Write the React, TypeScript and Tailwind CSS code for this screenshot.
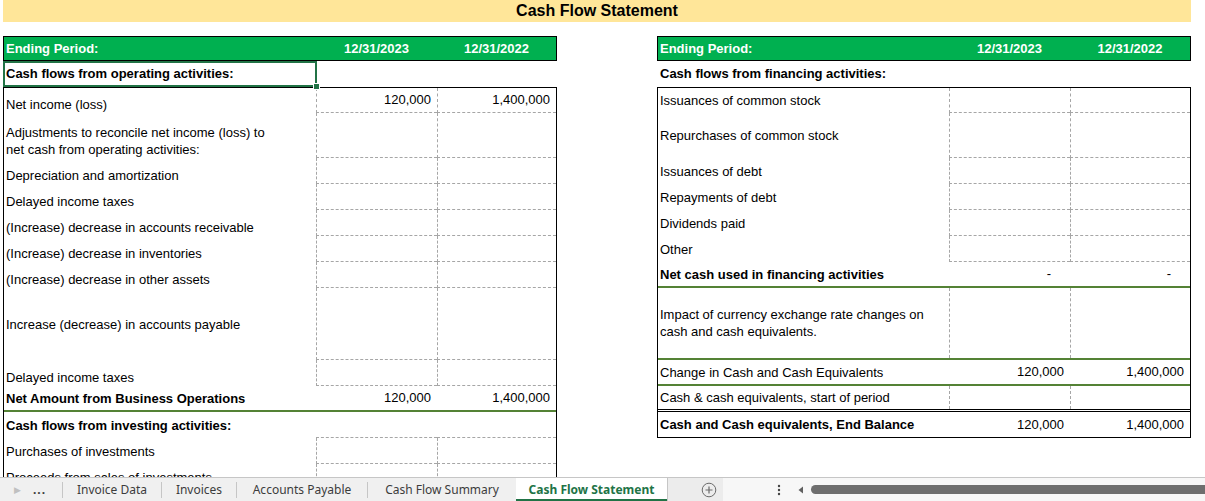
import type { ReactNode } from "react";

type Row = {
  label: string[];
  v1?: string;
  v2?: string;
  h: string;
  bold?: boolean;
  align?: "end" | "center";
  grid?: "full" | "vertical" | "bottom" | "none";
  line?: "green" | "double";
  dash?: boolean;
};

const leftRows: Row[] = [
  { label: ["Net income (loss)"], v1: "120,000", v2: "1,400,000", h: "h-[25px]", align: "end", grid: "full" },
  {
    label: ["Adjustments to reconcile net income (loss) to", "net cash from operating activities:"],
    h: "h-[45px]",
    align: "end",
    grid: "full",
  },
  { label: ["Depreciation and amortization"], h: "h-[26px]", align: "end", grid: "full" },
  { label: ["Delayed income taxes"], h: "h-[26px]", align: "end", grid: "full" },
  { label: ["(Increase) decrease in accounts receivable"], h: "h-[26px]", align: "end", grid: "full" },
  { label: ["(Increase) decrease in inventories"], h: "h-[26px]", align: "end", grid: "full" },
  { label: ["(Increase) decrease in other assets"], h: "h-[26px]", align: "end", grid: "full" },
  { label: ["Increase (decrease) in accounts payable"], h: "h-[72px]", grid: "full" },
  { label: ["Delayed income taxes"], h: "h-[26px]", align: "end", grid: "full" },
  {
    label: ["Net Amount from Business Operations"],
    v1: "120,000",
    v2: "1,400,000",
    h: "h-[26px]",
    bold: true,
    line: "green",
  },
  { label: ["Cash flows from investing activities:"], h: "h-[26px]", bold: true, grid: "bottom" },
  { label: ["Purchases of investments"], h: "h-[26px]", grid: "full" },
  { label: ["Proceeds from sales of investments"], h: "h-[26px]", grid: "full" },
];

const rightRows: Row[] = [
  { label: ["Issuances of common stock"], h: "h-[25px]", grid: "full" },
  { label: ["Repurchases of common stock"], h: "h-[45px]", grid: "full" },
  { label: ["Issuances of debt"], h: "h-[26px]", grid: "full" },
  { label: ["Repayments of debt"], h: "h-[26px]", grid: "full" },
  { label: ["Dividends paid"], h: "h-[26px]", grid: "full" },
  { label: ["Other"], h: "h-[26px]", grid: "full" },
  {
    label: ["Net cash used in financing activities"],
    v1: "-",
    v2: "-",
    dash: true,
    h: "h-[26px]",
    bold: true,
    line: "green",
  },
  {
    label: ["Impact of currency exchange rate changes on", "cash and cash equivalents."],
    h: "h-[72px]",
    grid: "vertical",
    line: "green",
  },
  {
    label: ["Change in Cash and Cash Equivalents"],
    v1: "120,000",
    v2: "1,400,000",
    h: "h-[26px]",
    line: "green",
  },
  { label: ["Cash & cash equivalents, start of period"], h: "h-[26px]", grid: "vertical", line: "double" },
  {
    label: ["Cash and Cash equivalents, End Balance"],
    v1: "120,000",
    v2: "1,400,000",
    h: "h-[25px]",
    bold: true,
  },
];

const gridClass = {
  full: "border-l border-b border-dashed border-[#a6a6a6]",
  vertical: "border-l border-dashed border-[#a6a6a6]",
  bottom: "border-b border-dashed border-[#a6a6a6]",
  none: "",
};

const lineClass = {
  green: "border-b-2 border-[#548235]",
  double: "border-b-[3px] border-double border-black",
};

function SheetRow({ row, cols }: { row: Row; cols: string }) {
  const cell = gridClass[row.grid ?? "none"];
  const pad = row.dash ? "pr-[19px]" : "pr-[6px]";
  return (
    <div className={`grid ${cols} ${row.h} ${row.line ? lineClass[row.line] : ""}`}>
      <div
        className={`flex pl-[2px] leading-[17px] ${row.align === "end" ? "items-end" : "items-center"} ${
          row.bold ? "font-bold" : ""
        }`}
      >
        <div className="whitespace-nowrap">
          {row.label.map((l) => (
            <div key={l}>{l}</div>
          ))}
        </div>
      </div>
      <div className={`flex items-center justify-end ${pad} ${cell}`}>{row.v1}</div>
      <div className={`flex items-center justify-end ${pad} ${cell}`}>{row.v2}</div>
    </div>
  );
}

function Header({ cols }: { cols: string }) {
  return (
    <div className={`grid ${cols} h-[25px] items-center border border-black bg-[#00b050] font-bold text-white`}>
      <div className="pl-[2px]">Ending Period:</div>
      <div className="text-center">12/31/2023</div>
      <div className="text-center">12/31/2022</div>
    </div>
  );
}

function Tab({ children, w }: { children: ReactNode; w: string }) {
  return (
    <div className="flex items-center">
      <div className="h-[16px] w-px bg-[#c6c6c6]" />
      <div className={`${w} text-center`}>{children}</div>
    </div>
  );
}

export default function App() {
  const leftCols = "grid-cols-[312px_121px_119px]";
  const rightCols = "grid-cols-[291px_121px_120px]";

  return (
    <div className="flex h-[501px] w-[1205px] flex-col overflow-hidden bg-white font-['Liberation_Sans',Arial,sans-serif] text-[13px] text-black">
      <div className="h-[477px] overflow-hidden">
        <div className="ml-[3px] flex h-[22px] w-[1188px] items-center justify-center bg-[#ffe699] text-[16px] font-bold">
          Cash Flow Statement
        </div>

        <div className="mt-[14px] flex gap-[100px] pl-[3px]">
          <section className="w-[554px]">
            <Header cols={leftCols} />
            <div className="flex h-[26px]">
              <div className="relative z-10 flex w-[314px] items-center border-2 border-[#217346] pl-[1px] font-bold">
                Cash flows from operating activities:
                <span className="absolute bottom-[-5px] right-[-5px] h-[7px] w-[7px] border border-white bg-[#217346]" />
              </div>
            </div>
            <div className="border-x border-t border-black">
              {leftRows.map((row, i) => (
                <SheetRow key={i} row={row} cols={leftCols} />
              ))}
            </div>
          </section>

          <section className="w-[534px]">
            <Header cols={rightCols} />
            <div className="flex h-[26px] items-center pl-[3px] font-bold">
              Cash flows from financing activities:
            </div>
            <div className="border border-black">
              {rightRows.map((row, i) => (
                <SheetRow key={i} row={row} cols={rightCols} />
              ))}
            </div>
          </section>
        </div>
      </div>

      <div className="flex h-[24px] items-stretch border-t border-[#c6c6c6] bg-[#f0f0f0] font-['Noto_Sans',sans-serif] text-[12px] text-[#3c3c3c]">
        <div className="flex w-[62px] items-center">
          <span className="ml-[14px] text-[9px] text-[#c0c0c0]">▶</span>
          <span className="ml-[12px] font-bold tracking-[1px]">...</span>
        </div>
        <Tab w="w-[98px]">Invoice Data</Tab>
        <Tab w="w-[74px]">Invoices</Tab>
        <Tab w="w-[130px]">Accounts Payable</Tab>
        <Tab w="w-[148px]">Cash Flow Summary</Tab>
        <div className="flex w-[151px] items-center justify-center border-b-2 border-[#217346] bg-white pt-[2px] font-bold text-[#217346]">
          Cash Flow Statement
        </div>
        <div className="flex w-[56px] items-center justify-center border-l border-[#c6c6c6] bg-[#ececec]">
          <svg width="16" height="16" viewBox="0 0 16 16" className="ml-[26px]">
            <circle cx="8" cy="8" r="6.8" fill="none" stroke="#6b6b6b" strokeWidth="1" />
            <path d="M8 4.5v7M4.5 8h7" stroke="#6b6b6b" strokeWidth="1.2" />
          </svg>
        </div>
        <div className="flex flex-1 items-center bg-[#f7f7f7]">
          <svg width="4" height="14" viewBox="0 0 4 14" className="ml-[54px]">
            <circle cx="2" cy="3" r="1.2" fill="#444" />
            <circle cx="2" cy="7" r="1.2" fill="#444" />
            <circle cx="2" cy="11" r="1.2" fill="#444" />
          </svg>
          <svg width="6" height="8" viewBox="0 0 6 8" className="ml-[17px]">
            <path d="M5 0.5 L0.5 4 L5 7.5 Z" fill="#606060" />
          </svg>
          <div className="ml-[7px] h-[9px] flex-1 rounded-l-full bg-[#6e6e6e]" />
        </div>
      </div>
    </div>
  );
}
